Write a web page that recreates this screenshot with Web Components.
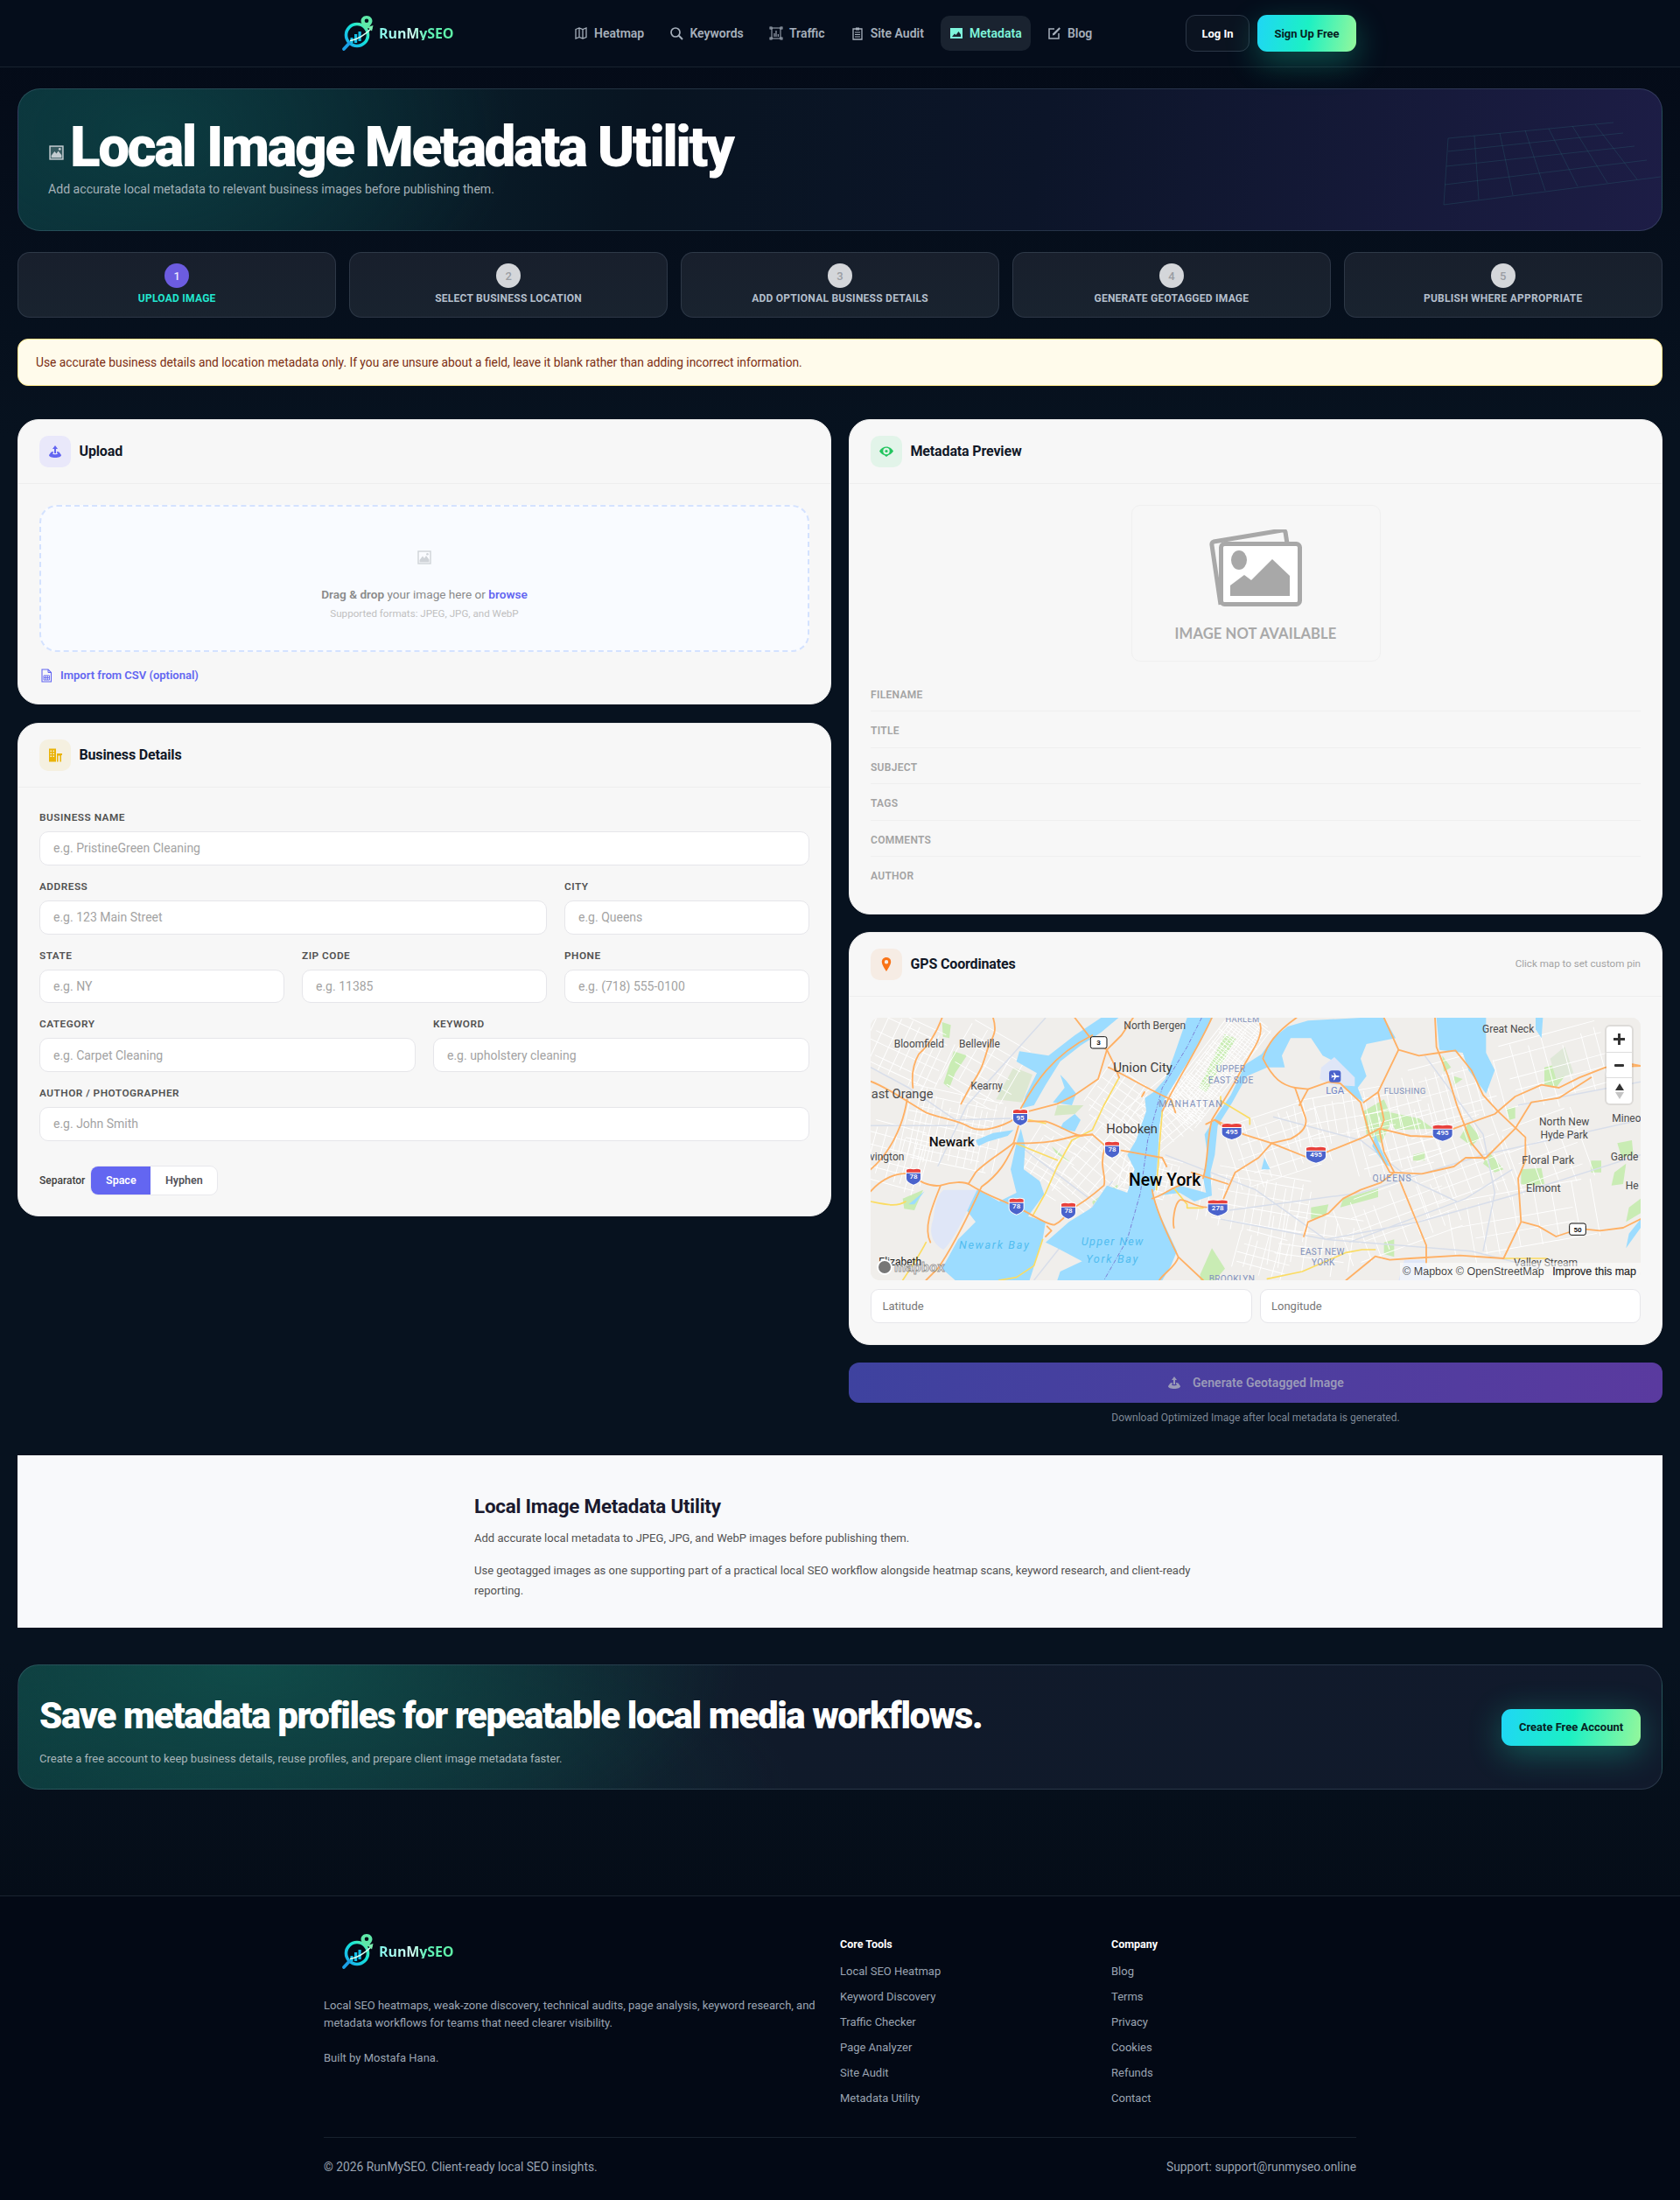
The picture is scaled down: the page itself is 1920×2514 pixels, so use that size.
<!DOCTYPE html>
<html lang="en">
<head>
<meta charset="utf-8">
<title>Local Image Metadata Utility</title>
<style>
html,body{margin:0;padding:0}
body{font-family:Roboto,"Liberation Sans",sans-serif;background:linear-gradient(180deg,#040a17 0,#07121f 500px,#07121f 1900px,#050d18 2164px);color:#fff}
</style>
</head>
<body>
<rm-nav></rm-nav>
<rm-page>
  <rm-hero heading="Local Image Metadata Utility" sub="Add accurate local metadata to relevant business images before publishing them."></rm-hero>
  <rm-steps>
    <rm-step n="1" active>Upload Image</rm-step>
    <rm-step n="2">Select Business Location</rm-step>
    <rm-step n="3">Add Optional Business Details</rm-step>
    <rm-step n="4">Generate Geotagged Image</rm-step>
    <rm-step n="5">Publish Where Appropriate</rm-step>
  </rm-steps>
  <rm-alert>Use accurate business details and location metadata only. If you are unsure about a field, leave it blank rather than adding incorrect information.</rm-alert>
  <rm-workspace>
    <rm-card slot="left" heading="Upload" tone="purple" icon="upload"><rm-upload></rm-upload></rm-card>
    <rm-card slot="left" heading="Business Details" tone="yellow" icon="building"><rm-form></rm-form></rm-card>
    <rm-card slot="right" heading="Metadata Preview" tone="green" icon="eye"><rm-preview></rm-preview></rm-card>
    <rm-card slot="right" heading="GPS Coordinates" tone="orange" icon="pin" hint="Click map to set custom pin"><rm-gps></rm-gps></rm-card>
    <rm-generate slot="right"></rm-generate>
  </rm-workspace>
  <rm-about></rm-about>
  <rm-cta></rm-cta>
</rm-page>
<rm-footer></rm-footer>

<script>
const IC = {
  map:'<path d="M2 3.500 6 2l4 1.500L14 2v10.500L10 14l-4-1.500L2 14zM6 2v10.500M10 3.500V14" fill="none" stroke="currentColor" stroke-width="1.300"/>',
  search:'<circle cx="7" cy="7" r="5" fill="none" stroke="currentColor" stroke-width="1.700"/><path d="M10.800 10.800 15 15" stroke="currentColor" stroke-width="2"/>',
  traffic:'<path d="M3 2h10v12H3z" fill="none" stroke="currentColor" stroke-width="1"/><g fill="#07101d" stroke="currentColor"><rect x="1" y="1" width="2" height="2"/><rect x="13" y="1" width="2" height="2"/><rect x="1" y="13" width="2" height="2"/><rect x="13" y="13" width="2" height="2"/></g><path d="M6 12V8M8 12V5M10.300 12V9" stroke="currentColor" stroke-width="1.100"/>',
  audit:'<path d="M3 3h10v12H3z" fill="none" stroke="currentColor" stroke-width="1.300"/><path d="M6 1.500h4V4.500H6z" fill="currentColor"/><path d="M5 7h6M5 9.500h6M5 12h6" stroke="currentColor" stroke-width="1.100"/>',
  image:'<path fill-rule="evenodd" d="M1 2h14v12H1zM3 12h10V9.500L10.500 6 7.500 10 6 8.500z" fill="currentColor"/><circle cx="5" cy="5.500" r="1.400" fill="currentColor"/>',
  photo:'<rect x="1" y="1" width="14" height="14" fill="#fff" fill-opacity=".18" stroke="currentColor" stroke-width="1.400"/><path d="M2.500 13.500V11L6 6.500l2 2.500 2-3 3.500 4.500v3z" fill="currentColor"/><circle cx="11.500" cy="4.200" r="1.300" fill="currentColor"/>',
  pen:'<path d="M8 3H2v11h11V8" fill="none" stroke="currentColor" stroke-width="1.500"/><path d="M13.500 1.200 15 2.700 8 10l-2.200.600.500-2.300z" fill="currentColor"/>',
  upload:'<path d="M8 1 11 5H9v5H7V5H5z" fill="currentColor"/><path d="M3.500 8.500 6 8v1.500C5 10 4.800 10.500 5.500 10.800 7 11.500 9 11.500 10.500 10.800 11.200 10.500 11 10 10 9.500V8l2.500.500L15 12c0 2-3 3-7 3s-7-1-7-3z" fill="currentColor"/>',
  building:'<path fill-rule="evenodd" d="M1 .500h8v15H1zM2.500 2.500V4H4V2.500zM5.500 2.500V4H7V2.500zM2.500 5.500V7H4V5.500zM5.500 5.500V7H7V5.500zM2.500 8.500V10H4V8.500zM5.500 8.500V10H7V8.500z" fill="currentColor"/><path fill-rule="evenodd" d="M10 6h6v2h-1v7.500h-1.500V8.500h-2v7H10z" fill="currentColor"/>',
  eye:'<path fill-rule="evenodd" d="M0 7.500C2 4 5 2.500 8 2.500s6 1.500 8 5c-1.500 2.500-3.500 4-5.500 4.600L8 14l-2.500-1.900C3.500 11.500 1.500 10 0 7.500zM8 3.800a3.700 3.700 0 1 0 0 7.400 3.700 3.700 0 0 0 0-7.400z" fill="currentColor"/><circle cx="8" cy="7.500" r="1.600" fill="currentColor"/>',
  pin:'<path fill-rule="evenodd" d="M8 0C4.800 0 2.800 2.300 2.800 5.200 2.800 8.800 8 16 8 16s5.200-7.200 5.200-10.800C13.200 2.300 11.200 0 8 0zm0 3a2.200 2.200 0 1 1 0 4.400A2.200 2.200 0 0 1 8 3z" fill="currentColor"/>',
  csv:'<path d="M3 1h7l3.500 3.500V15H3z" fill="none" stroke="currentColor" stroke-width="1.100"/><path d="M10 1v3.500h3.500" fill="none" stroke="currentColor"/><path d="M5 8h6.500v5H5zM5 10.500h6.500M7.200 8v5M9.400 8v5" fill="none" stroke="currentColor" stroke-width=".9"/>'
};
const svgIcon=(n,s=16,extra='')=>`<svg width="${s}" height="${s}" viewBox="0 0 16 16" aria-hidden="true" ${extra}>${IC[n]}</svg>`;

function define(name,css,html,setup){
  customElements.define(name,class extends HTMLElement{
    constructor(){
      super();
      const root=this.attachShadow({mode:'open'});
      const tpl=document.createElement('template');
      tpl.innerHTML=`<style>${css}</style>${typeof html==='function'?html(this):html}`;
      root.appendChild(tpl.content.cloneNode(true));
    }
    connectedCallback(){
      if(this._done)return;this._done=true;
      if(typeof html==='function'){this.shadowRoot.innerHTML=`<style>${css}</style>${html(this)}`;}
      if(setup)setup(this,this.shadowRoot);
    }
  });
}

define('rm-logo',`
:host{display:inline-flex;align-items:center;height:42px;color:#fff}
svg{display:block;flex:none}
span{font:700 16px/1 "Open Sans",Roboto,sans-serif;letter-spacing:-.1px;margin-left:-1px;background:linear-gradient(90deg,#7ff3e8 0,#d8fff4 45%,#5ff0b8 62%,#5ff2a4 100%);-webkit-background-clip:text;background-clip:text;color:transparent}
`,`<svg width="44" height="42" viewBox="0 0 44 42">
<defs><linearGradient id="lg" x1="0" y1="1" x2="1" y2="0"><stop offset="0" stop-color="#1aa8f0"/><stop offset=".6" stop-color="#14e6d8"/><stop offset="1" stop-color="#6ef0a0"/></linearGradient></defs>
<circle cx="18" cy="23" r="12.500" fill="none" stroke="url(#lg)" stroke-width="3.600"/>
<path d="M9.500 32 3 39" stroke="#1a9fe6" stroke-width="3.800" stroke-linecap="round"/>
<path d="M10.500 26h3v6h-3zM15 22h3.200v10H15zM19.500 19h3.200v11h-3.200z" fill="#12bfe6"/>
<path d="M10 29.500C20 28 27 23 35 15" fill="none" stroke="#d6fff0" stroke-width="1.700"/><path d="M30 14l6.500-2-1.500 6.500z" fill="#7ef0b0"/>
<path d="M29 1c-4 0-6.500 3-6.500 6 0 3.800 6.500 10 6.500 10s6.500-6.200 6.500-10C35.500 4 33 1 29 1zm0 3.500a2.300 2.300 0 1 1 0 4.600 2.300 2.300 0 0 1 0-4.600z" fill="#5fe8a8"/>
</svg><span>RunMySEO</span>`);

define('rm-nav',`
:host{display:block;height:76px;border-bottom:1px solid #18222f;background:#050d1b;position:relative;z-index:2}
.in{box-sizing:border-box;width:1180px;height:76px;margin:0 auto;display:flex;align-items:center;padding-top:0}
rm-logo{width:276px;padding-left:20px;box-sizing:border-box}
nav{display:flex;gap:9.200px;margin-left:0}
a{display:flex;align-items:center;gap:7px;height:40px;padding:0 10px;border-radius:10px;font:600 14px/1 Roboto,sans-serif;color:#a7b0bc;text-decoration:none;white-space:nowrap}
a svg{flex:none}
a.on{background:#1a2330;color:#7ff5dc}
.act{margin-left:auto;display:flex;gap:9px}
button{font:700 13px/1 Roboto,sans-serif;height:42px;border-radius:11px;border:1px solid #2c3747;background:#0b1320;color:#fff;padding:0}
.li{width:73px}
.su{width:113px;border:0;background:linear-gradient(100deg,#1fd6f5 0,#1cf0c4 50%,#95f79b 100%);color:#06211f;box-shadow:0 12px 36px rgba(25,240,190,.3)}
`,`<div class="in"><rm-logo></rm-logo><nav>
<a href="#">${svgIcon('map')}Heatmap</a><a href="#">${svgIcon('search')}Keywords</a><a href="#">${svgIcon('traffic')}Traffic</a><a href="#">${svgIcon('audit')}Site Audit</a><a href="#" class="on">${svgIcon('image')}Metadata</a><a href="#">${svgIcon('pen')}Blog</a>
</nav><div class="act"><button class="li">Log In</button><button class="su">Sign Up Free</button></div></div>`);

define('rm-page',`:host{display:block;padding:24px 20px 0;box-sizing:border-box}`,`<slot></slot>`);

define('rm-hero',`
:host{display:block;position:relative;overflow:hidden;box-sizing:border-box;height:163px;border:1px solid rgba(120,150,170,.24);border-radius:26px;padding:32px 34px 0;
background:radial-gradient(420px 260px at 8% 30%,rgba(13,70,72,.65),rgba(13,70,72,0) 100%),linear-gradient(100deg,#0a2d36 0,#081421 38%,#0c1529 62%,#1d1d46 100%)}
h1{margin:0;display:flex;font:900 64px/70.400px Roboto,sans-serif;letter-spacing:-2.560px;color:#fff}
h1 svg{flex:none;margin:32px 7px 0 1px;color:#c3ccd0}
p{margin:2px 0 0;font:400 14.100px/20px Roboto,sans-serif;color:#a3b1b8}
.grid{position:absolute;right:0;top:0;left:0;bottom:0;pointer-events:none}
`,el=>`<h1>${svgIcon('photo',17)}${el.getAttribute('heading')||''}</h1><p>${el.getAttribute('sub')||''}</p>
<svg class="grid" width="1878" height="161" viewBox="21 102 1878 161" fill="none" stroke="#2a6a78" stroke-opacity=".3" stroke-width="1">
<path d="M1655 158 1844 140M1655 173 1855 152M1653 190 1868 167M1651 211 1882 183M1650 234 1898 202"/>
<path d="M1655 158 1650 234M1685 155 1690 228M1714 152 1729 223M1743 149 1766 218M1770 147 1803 213M1797 144 1837 209M1823 142 1871 205"/></svg>`);

define('rm-steps',`:host{display:grid;grid-template-columns:repeat(5,1fr);gap:14.400px;margin-top:24px}`,`<slot></slot>`);
define('rm-step',`
:host{display:flex;flex-direction:column;align-items:center;box-sizing:border-box;height:75px;padding-top:12px;border:1px solid rgba(130,150,175,.2);border-radius:14px;background:linear-gradient(180deg,#181f2c,#19232f)}
i{display:flex;align-items:center;justify-content:center;width:28px;height:28px;border-radius:50%;background:#d4d6da;color:#9a9da3;font:500 13px/1 Roboto,sans-serif}
span{margin-top:4px;font:700 12px/16px Roboto,sans-serif;letter-spacing:.25px;text-transform:uppercase;color:#b4bfcc}
:host([active]) i{background:#6c5ce0;color:#e9e7ff}
:host([active]) span{color:#22e6cf}
`,el=>`<i>${el.getAttribute('n')||''}</i><span><slot></slot></span>`);

define('rm-alert',`:host{display:block;box-sizing:border-box;height:54px;margin-top:24px;padding:16px 20px;border:1px solid #fde68a;border-radius:12px;background:#fffbeb;color:#7c2d12;font:400 13.770px/20px Roboto,sans-serif}`,`<slot></slot>`);

define('rm-workspace',`
:host{display:grid;grid-template-columns:1fr 1fr;gap:20px;margin-top:38px;align-items:start}
.col{display:flex;flex-direction:column;gap:20px}
.col.l{gap:21px}
`,`<div class="col l"><slot name="left"></slot></div><div class="col"><slot name="right"></slot></div>`);

const TONES={purple:['#e9e8fa','#6366f1'],yellow:['#f5f0e0','#eab308'],green:['#e2f4e9','#22c55e'],orange:['#f6ece4','#f97316']};
define('rm-card',`
:host{display:block;box-sizing:border-box;border:1px solid #ececec;border-radius:24px;background:#f7f7f7;color:#111827;overflow:hidden}
header{box-sizing:border-box;height:73px;display:flex;align-items:center;padding:0 24px;gap:9.500px;border-bottom:1px solid #eeeeee}
.t{width:36px;height:36px;border-radius:10px;display:flex;align-items:center;justify-content:center}
h2{margin:0;font:700 16px/1 Roboto,sans-serif;letter-spacing:-.15px;color:#111827}
small{margin-left:auto;font:400 11.600px/1 Roboto,sans-serif;color:#a3a3a3}
`,el=>{const t=TONES[el.getAttribute('tone')]||TONES.purple;const h=el.getAttribute('hint');
return `<header><div class="t" style="background:${t[0]};color:${t[1]}">${svgIcon(el.getAttribute('icon'))}</div><h2>${el.getAttribute('heading')||''}</h2>${h?`<small>${h}</small>`:''}</header><slot></slot>`});

define('rm-upload',`
:host{display:block;padding:24px 24px 22px}
.dz{box-sizing:border-box;height:168px;border:2px dashed #d4e2ff;border-radius:20px;background:#f9fbff;display:flex;flex-direction:column;align-items:center;padding-top:50px;color:#8a8a8a;font:400 13.600px/20px Roboto,sans-serif}
.dz svg{color:#cfd3d8}
.dz p{margin:24px 0 0}
b{font-weight:600}
.br{color:#6366f1;font-weight:600}
.dz small{font-size:11.600px;line-height:16px;color:#c0c0c0;margin-top:4px}
.imp{display:flex;align-items:center;gap:8px;height:20px;margin-top:17px;font:600 13px/20px Roboto,sans-serif;color:#6366f1}
`,`<div class="dz">${svgIcon('photo',16)}<p><b>Drag &amp; drop</b> your image here or <span class="br">browse</span></p><small>Supported formats: JPEG, JPG, and WebP</small></div>
<div class="imp">${svgIcon('csv',16)}Import from CSV (optional)</div>`);

define('rm-field',`
:host{display:block;min-width:0}
label{display:block;height:16px;margin-bottom:8px;font:600 11.800px/16px Roboto,sans-serif;letter-spacing:.5px;text-transform:uppercase;color:#525252}
input{display:block;box-sizing:border-box;width:100%;height:38.750px;border:1px solid #e6e6ea;border-bottom-width:1.500px;border-radius:10px;background:#fff;padding:0 15px;font:400 14px/1 Roboto,sans-serif;color:#222;outline:0}
input::placeholder{color:#a3a3a3;opacity:1}
`,el=>`<label>${el.getAttribute('label')||''}</label><input placeholder="${el.getAttribute('ph')||''}" aria-label="${el.getAttribute('label')||el.getAttribute('ph')}">`);

define('rm-form',`
:host{display:block;padding:26px 24px 23px}
.r{display:grid;gap:20px;margin-bottom:16px}
.sep{display:flex;align-items:center;gap:6px;margin-top:28px;font:500 12px/1 Roboto,sans-serif;color:#404040}
.seg{display:flex;height:32px;border:1px solid #e8e8ec;border-radius:9px;overflow:hidden;background:#fff}
.seg span{display:flex;align-items:center;justify-content:center;font:600 12.500px/1 Roboto,sans-serif;color:#52525b;width:76px}
.seg span.on{width:68px;background:#6366f1;color:#fff}
`,`<div class="r"><rm-field label="Business Name" ph="e.g. PristineGreen Cleaning"></rm-field></div>
<div class="r" style="grid-template-columns:580px 280px"><rm-field label="Address" ph="e.g. 123 Main Street"></rm-field><rm-field label="City" ph="e.g. Queens"></rm-field></div>
<div class="r" style="grid-template-columns:repeat(3,1fr)"><rm-field label="State" ph="e.g. NY"></rm-field><rm-field label="Zip Code" ph="e.g. 11385"></rm-field><rm-field label="Phone" ph="e.g. (718) 555-0100"></rm-field></div>
<div class="r" style="grid-template-columns:1fr 1fr"><rm-field label="Category" ph="e.g. Carpet Cleaning"></rm-field><rm-field label="Keyword" ph="e.g. upholstery cleaning"></rm-field></div>
<div class="r" style="margin:0"><rm-field label="Author / Photographer" ph="e.g. John Smith"></rm-field></div>
<div class="sep"><span>Separator</span><div class="seg"><span class="on">Space</span><span>Hyphen</span></div></div>`);

define('rm-preview',`
:host{display:block;padding:24px 24px 23.500px}
.ph{box-sizing:border-box;width:285px;height:179px;margin:0 auto 15.500px;border:1px solid #f0f0f0;border-radius:10px;background:#f7f7f7;display:flex;flex-direction:column;align-items:center;padding-top:27px}
.ph span{margin-top:21px;font:700 16.600px/20px Lato,"Open Sans",sans-serif;color:#a9a9a9;letter-spacing:.1px;white-space:nowrap}
.row{box-sizing:border-box;height:41.500px;padding-top:14px;border-bottom:1px solid #efefef;font:600 12px/16px Roboto,sans-serif;letter-spacing:.3px;color:#a3a3a3;text-transform:uppercase}
.row:last-child{border:0}
`,`<div class="ph"><svg width="106" height="88" viewBox="0 0 106 88"><path d="M13 86 3 18c-.3-2 .5-3.500 2-4L83 1c2-.3 3.500.5 4 2l2 13" fill="#f7f7f7" stroke="#a8a8a8" stroke-width="5" stroke-linejoin="round"/><rect x="13.500" y="16.500" width="90" height="69" rx="4" fill="#fff" stroke="#a8a8a8" stroke-width="5"/><ellipse cx="34" cy="35" rx="9" ry="11" fill="#a8a8a8"/><path d="M24 76V64l16-12 8 6 24-24 20 19v23z" fill="#a8a8a8"/></svg><span>IMAGE NOT AVAILABLE</span></div>
<div class="row">Filename</div><div class="row">Title</div><div class="row">Subject</div><div class="row">Tags</div><div class="row">Comments</div><div class="row">Author</div>`);

/* map */
function streetGrids(){
  let s=1234;const rnd=()=>(s=(s*1103515245+12345)&0x7fffffff)/0x7fffffff;
  const clusters=[ // cx,cy,w,h,angle,spacing
    [1185,170,440,150,-52,9],[1010,330,240,200,-40,18],[880,300,200,260,-55,26],[790,520,300,260,-50,30],[960,540,200,140,15,18],
    [280,390,330,260,12,24],[130,120,300,220,25,34],[400,170,240,240,-60,36],[80,480,220,220,15,30],[620,500,200,200,-58,34],
    [1400,440,330,240,-18,40],[1320,640,380,220,10,34],[1640,340,360,170,-10,36],[1800,430,300,240,-15,42],[1990,260,300,230,-15,36],
    [2030,500,340,280,-20,50],[1820,690,420,240,-20,50],[2350,180,400,260,-15,50],[2320,470,340,260,-20,54],[2240,700,500,220,-10,56],[1530,780,320,210,8,42],[1350,820,200,150,15,34]
  ];
  let out='';
  for(const [cx,cy,w,h,a,sp] of clusters){
    let d='';
    for(let x=-w/2;x<=w/2;x+=sp*(.7+rnd()*.7)){const t=-h/2+rnd()*h*.2,b=h/2-rnd()*h*.2;d+=`M${x.toFixed(0)} ${t.toFixed(0)}V${b.toFixed(0)}`;}
    for(let y=-h/2;y<=h/2;y+=sp*(.8+rnd()*.9)){const l=-w/2+rnd()*w*.2,r=w/2-rnd()*w*.2;d+=`M${l.toFixed(0)} ${y.toFixed(0)}H${r.toFixed(0)}`;}
    out+=`<path transform="translate(${cx} ${cy}) rotate(${a})" d="${d}"/>`;
  }
  return out;
}
const shield=(x,y,n)=>{const w=String(n).length>2?36:27;
 return `<g transform="translate(${x} ${y})"><path d="M${-w} -24q${w/2} -6 ${w} -2q${w/2} -4 ${w} 2v32q0 14 ${-w} 24q${-w} -10 ${-w} -24z" fill="#fff"/><path d="M${-w+3} -22q${w/2-2} -5 ${w-3} -1q${w/2} -4 ${w-3} 1v9h${-2*w+6}z" fill="#e8413c"/><path d="M${-w+3} -10h${2*w-6}v18q0 12 ${-w+3} 21q${-w+3} -9 ${-w+3} -21z" fill="#4a63cc"/><text y="10" text-anchor="middle" font-size="24" font-weight="600" fill="#fff">${n}</text></g>`};
const sqShield=(x,y,n)=>`<g transform="translate(${x} ${y})"><rect x="-28" y="-20" width="56" height="40" rx="7" fill="#fff" stroke="#111" stroke-width="3"/><text y="9" text-anchor="middle" font-size="24" font-weight="700" fill="#111">${n}</text></g>`;
const lab=(x,y,t,size,col='#4b4b4b',extra='')=>`<text x="${x}" y="${y}" font-size="${size}" fill="${col}" ${extra}>${t}</text>`;
const DIST='#8191bb',MID='text-anchor="middle"';

define('rm-map',`
:host{display:block;position:relative;height:300px;overflow:hidden;border-radius:10px;background:#f0eeeb}
svg.m{display:block;width:880px;height:300px}
text{font-family:Roboto,sans-serif}
.z{position:absolute;right:10px;top:10px;width:29px;height:88px;background:#fff;border-radius:4px;box-shadow:0 0 0 2px rgba(0,0,0,.08);display:flex;flex-direction:column}
.z div{flex:1;display:flex;align-items:center;justify-content:center;border-top:1px solid #ddd}
.z div:first-child{border:0}
.attr{position:absolute;right:0;bottom:0;background:rgba(255,255,255,.5);padding:0 5px 0 3px;height:20px;font:400 12.500px/20px "Liberation Sans",Arial,sans-serif;color:rgba(0,0,0,.75);white-space:nowrap}
.attr b{font-weight:400;color:rgba(0,0,0,.85);margin-left:6px;-webkit-text-stroke:.3px rgba(0,0,0,.6)}
.lg{position:absolute;left:7px;bottom:6px;display:flex;align-items:center;gap:2px;font:700 14.500px/1 "Liberation Sans",Arial,sans-serif;color:#fff;-webkit-text-stroke:1px rgba(70,70,70,.55);letter-spacing:.4px}
.lg i{width:18px;height:18px;border-radius:50%;background:#777;border:2px solid #fff;box-sizing:border-box}
`,()=>`<svg class="m" viewBox="0 0 2640 900">
<rect width="2640" height="900" fill="#f0eeeb"/>
<g fill="#c9ecb4">
<path d="M1125 240 1215 55 1252 72 1150 255z"/><path d="M245 15 275 25 270 70 248 65z"/><path d="M285 115 330 130 290 190 270 240 250 225z"/><path d="M490 170 555 195 520 290 430 280z" fill="#dde8d2"/><path d="M620 440 690 500 640 470z"/><path d="M640 300 730 300 700 330 630 335z" fill="#d6e8c5"/><path d="M110 620 180 590 150 660 115 655z"/><path d="M760 630 850 570 830 620 770 680z"/><path d="M920 700 985 665 975 720 930 740z"/><path d="M1130 880 1170 790 1215 860 1180 900 1130 900z"/>
<path d="M1690 320 1760 280 1790 350 1750 430 1700 400z"/><path d="M1760 320 1880 345 1930 380 1800 385z"/><path d="M2120 460 2170 520 2140 530 2100 500z"/><path d="M2050 360 2090 410 2060 440 2020 410z"/><path d="M2180 310 2210 305 2210 345 2190 350z"/><path d="M2310 170 2350 160 2380 200 2350 240 2310 230z"/><path d="M1620 620 1740 585 1740 615 1610 650z"/><path d="M2230 520 2300 515 2310 570 2260 575 2230 570z"/><path d="M2470 490 2505 490 2505 530 2470 530z"/><path d="M2560 430 2610 420 2615 470 2575 480z"/><path d="M2550 530 2590 500 2580 570 2540 575z"/><path d="M1760 770 1795 760 1795 820 1760 810z"/><path d="M1510 650 1570 640 1560 680 1510 690z"/><path d="M1860 470 1900 460 1900 490 1860 490z"/><path d="M2000 200 2030 210 2000 230z"/>
<path d="M2330 140 2380 100 2410 190 2350 210z" fill="#dfe8d8"/><path d="M1960 130 1990 170 1965 185z"/><path d="M2600 650 2640 620 2640 670 2590 700z"/>
</g>
<g fill="none" stroke="#fff" stroke-width="2.800">${streetGrids()}</g>
<g fill="none" stroke="#d8deea" stroke-width="4.500">
<path d="M0 170 130 240 290 350 480 345M0 370 290 370M500 430 750 620M600 0 330 300 230 510M830 560 560 900M1010 470 1320 590 1560 760 2060 800 2300 860M1230 660 1680 600 2100 470 2640 350M1200 690 1560 760 1880 700 2200 610 2640 470M1640 770 2040 620 2200 520M1380 340 1680 420 1860 560 2010 630M1900 130 2100 400 2140 600 2100 800M2220 300 2640 220"/>
</g>
<g fill="#9cdcff">
<path d="M1085 0H1172L1130 85 1060 195 1005 285 990 370 985 470 975 590 968 600 985 660 1050 800 1030 850 1000 900H640L650 870 725 835 640 790 600 770 680 700 760 650 810 575 880 600 905 520 880 470 910 420 945 320 940 275 970 255 1010 210 1040 130z"/>
<path d="M1150 600 1140 550 1155 470 1145 400 1180 345 1235 265 1285 160 1340 125 1380 70 1430 30 1500 10 1680 0H1760L1800 70 1700 90 1680 140 1700 200 1670 240 1690 290 1660 270 1610 225 1590 150 1550 130 1510 70 1440 70 1410 130 1420 170 1360 170 1290 200 1240 290 1190 370 1180 470 1165 530 1170 610 1110 630 1060 600 990 610 1060 575z"/>
<path d="M500 430 515 380 530 440 525 520 580 560 595 605 540 680 600 700 590 760 545 900H290L245 860 300 760 360 700 290 610 370 590 440 630 500 600 480 520z"/>
<path d="M510 115 610 130 700 60 790 0 850 0 790 50 720 95 650 150 600 230 560 300 520 310 530 270 570 190 500 150z"/>
<path d="M650 195 665 240 625 290 690 300 705 260 670 215z"/>
<path d="M700 330 720 350 700 390 650 380 660 360z"/>
<path d="M360 420 420 395 490 385 470 405 400 425 370 440z"/>
<path d="M130 640 185 595 150 640z"/>
<path d="M1940 0H2110L2110 120 2140 180 2110 260 2050 180 2030 120 1950 110z"/>
<path d="M2280 0H2305L2300 70 2280 40z"/>
<path d="M2600 740 2640 690 2640 720 2590 790z"/>
<path d="M1730 400 1750 450 1780 510 1760 500 1720 440z"/>
<path d="M1350 480 1370 520 1340 520z"/>
</g>
<path d="M360 590H250C225 610 220 650 215 690 200 730 205 770 250 795 290 760 340 640 365 590z" fill="#dfe6f7"/>
<path d="M1545 170 1590 135 1660 205 1660 235 1580 230 1540 210z" fill="#dfe6f7"/>
<path d="M1830 830H1900L1920 900H1810z" fill="#dfe6f7"/>
<path d="M1135 0 1085 100 1000 240 950 420 925 600 880 760 800 900" fill="none" stroke="#7d7fd6" stroke-width="3" stroke-dasharray="14 5 3 5"/>
<g fill="none" stroke="#fbdc62" stroke-width="5" stroke-linecap="round" stroke-linejoin="round">
<path d="M852 205 800 300 760 385 690 420 640 510 600 600 555 680"/><path d="M500 432 640 488"/><path d="M1000 320 990 440 980 590"/><path d="M540 350 600 362"/><path d="M1040 585 1085 640V652H1140"/><path d="M1200 270V285L1300 345 1300 365"/><path d="M0 630C50 640 90 650 120 630"/><path d="M590 760 560 850 500 890 440 900"/><path d="M1730 795 1685 795 1630 805 1480 870 1360 895"/><path d="M2170 825 2320 825"/><path d="M190 770C170 810 130 870 110 900"/>
</g>
<g fill="none" stroke="#ffb064" stroke-width="5.500" stroke-linecap="round" stroke-linejoin="round">
<path d="M0 218C60 240 120 285 190 325 240 345 300 350 340 375 370 390 420 385 480 355L510 335"/>
<path d="M245 0C230 40 205 90 165 125 145 160 140 200 145 240"/>
<path d="M420 0C435 50 420 60 400 110 385 160 380 180 345 230L310 295"/>
<path d="M700 0 750 65 810 110 835 160 852 205"/>
<path d="M900 0 860 60 810 110 780 210 700 265 640 295 545 320"/>
<path d="M515 310C560 230 620 130 760 60"/>
<path d="M815 170C880 200 960 250 1030 280L1045 325"/>
<path d="M490 430 510 360"/>
<path d="M540 355H600C650 370 680 395 720 405L760 400"/>
<path d="M490 430C440 470 400 490 360 530L335 570"/>
<path d="M495 430C470 480 450 530 380 580 360 620 300 760 230 860L190 900"/>
<path d="M0 595C40 550 90 530 130 535 170 565 210 580 240 575 280 562 320 560 340 572 400 610 450 625 500 650 550 670 600 710 630 710 650 700 670 680 680 660"/>
<path d="M680 660C720 640 760 610 800 575 810 540 780 510 805 440"/>
<path d="M0 520C60 470 110 380 125 280"/>
<path d="M240 575C210 650 180 720 205 770"/>
<path d="M490 430C600 432 650 420 700 405L760 400 805 440"/>
<path d="M860 455 1000 480 1015 510"/>
<path d="M965 590C975 650 1010 730 1055 820 1050 850 1000 880 990 900M1055 820 1140 900"/>
<path d="M1170 0C1130 90 1060 200 1020 280L1000 320"/>
<path d="M1335 20C1350 70 1300 120 1260 200 1240 240 1200 300 1170 350 1150 430 1160 480 1140 550"/>
<path d="M965 620C1000 610 1020 590 1060 575M1100 530 1225 570M1155 650C1110 650 1080 620 1060 625 1040 640 1035 700 1040 720"/>
<path d="M605 715 620 730 600 750"/><path d="M930 270Q945 245 935 260"/>
<g transform="translate(1080 0)">
<path d="M70 365 100 350 125 370M100 350 200 400 295 430 420 480 485 460 610 410 665 380 770 405 850 408 920 380 1060 330 1130 270 1220 230 1280 240 1350 205 1440 170 1560 165"/>
<path d="M295 430 360 415C400 395 420 370 410 340L375 240C330 230 300 210 265 140 280 90 310 50 380 0"/>
<path d="M375 240 420 245 490 220 530 225 600 290 630 400 700 530 810 535 920 510 960 480 1030 480 1130 380 1185 290 1280 275 1390 205"/>
<path d="M610 290 660 255 730 110 680 0"/>
<path d="M660 255 680 350 665 390 680 460 715 530"/>
<path d="M730 110 800 130 870 120 925 112 980 180 1020 265 1070 320 1165 410 1165 490 1140 550 1150 700 1090 825"/>
<path d="M855 0 860 100 900 200 930 300 980 430 1025 485"/>
<path d="M295 430 250 480 170 530 130 620"/>
<path d="M405 750 420 700 490 670 540 620 600 590 670 565 715 530"/>
<path d="M735 560 825 780V840"/>
<path d="M1155 700 1210 715 1270 750 1315 735M1370 725 1420 730 1500 720 1560 690"/>
<path d="M1090 825 940 815 770 825 700 830 650 818 550 900"/>
<path d="M420 245 390 300"/>
<path d="M1480 150 1560 165"/>
</g>
</g>
${shield(513,340,95)}${shield(828,450,78)}${shield(147,543,78)}${shield(500,645,78)}${shield(678,660,78)}${shield(1238,388,495)}${shield(1527,468,495)}${shield(1961,393,495)}${shield(1190,650,278)}
${sqShield(782,85,3)}${sqShield(2424,725,50)}
<rect x="1572" y="181" width="40" height="40" rx="9" fill="#4a63cc"/><path d="M1592 186l2.500 1 .8 10 9.700 6v3l-10-3-.5 6 3 2.500v2l-5.500-1.500-5.500 1.500v-2l3-2.500-.5-6-10 3v-3l9.700-6 .8-10z" fill="#fff" transform="rotate(90 1592 201)"/>
${lab(868,40,'North Bergen',36)}${lab(80,103,'Bloomfield',36)}${lab(303,101,'Belleville',36)}${lab(832,185,'Union City',45,'#3c3c3c')}
${lab(1235,185,'UPPER',31,DIST,MID+' letter-spacing="1"')}${lab(1235,224,'EAST SIDE',31,DIST,MID+' letter-spacing="1"')}
${lab(343,247,'Kearny',36)}${lab(2,275,'ast Orange',44)}${lab(988,305,'MANHATTAN',31,DIST,'letter-spacing="3.500"')}
${lab(808,397,'Hoboken',44,'#3c3c3c')}${lab(200,440,'Newark',46,'#111','font-weight="500"')}${lab(-3,490,'vington',36)}
${lab(885,575,'New York',58,'#000','font-weight="500"')}
${lab(303,793,'Newark Bay',38,'#52bdf0','font-style="italic" letter-spacing="5"')}${lab(830,780,'Upper New',38,'#52bdf0',MID+' font-style="italic" letter-spacing="4"')}${lab(830,840,'York Bay',38,'#52bdf0',MID+' font-style="italic" letter-spacing="5"')}
${lab(28,848,'Elizabeth',36,'#222')}${lab(1275,15,'HARLEM',28,DIST,MID+' letter-spacing="1"')}
${lab(1473,813,'EAST NEW',30,DIST,'letter-spacing="1"')}${lab(1552,850,'YORK',30,DIST,MID+' letter-spacing="1"')}${lab(1160,906,'BROOKLYN',30,DIST,'letter-spacing="1"')}
${lab(2097,50,'Great Neck',36)}${lab(1592,260,'LGA',34,'#6f86c8',MID)}${lab(1760,262,'FLUSHING',29,DIST,'letter-spacing="1"')}
${lab(2378,370,'North New',36,'#4b4b4b',MID)}${lab(2378,415,'Hyde Park',36,'#4b4b4b',MID)}${lab(2542,358,'Mineo',36)}${lab(2537,488,'Garde',36)}
${lab(2233,500,'Floral Park',38)}${lab(2247,598,'Elmont',38)}${lab(2588,588,'He',36)}${lab(1788,562,'QUEENS',31,DIST,MID+' letter-spacing="3"')}${lab(2205,853,'Valley Stream',36)}
</svg>
<div class="z"><div><svg width="17" height="17" viewBox="0 0 17 17"><path d="M7 2h3v5h5v3h-5v5H7v-5H2V7h5z" fill="#333"/></svg></div><div><svg width="17" height="17" viewBox="0 0 17 17"><rect x="3" y="7" width="11" height="3" rx="1" fill="#333"/></svg></div><div><svg width="14" height="20" viewBox="0 0 14 20"><path d="M7 1l5 8H2z" fill="#333"/><path d="M7 19l5-8H2z" fill="#c4c4c4"/></svg></div></div>
<div class="lg"><i></i><span>mapbox</span></div>
<div class="attr">© Mapbox © OpenStreetMap <b>Improve this map</b></div>`);

define('rm-gps',`
:host{display:block;padding:24px}
.c{display:grid;grid-template-columns:1fr 1fr;gap:9px;margin-top:10px}
input{box-sizing:border-box;width:100%;height:38.500px;border:1px solid #e6e6ea;border-radius:9px;background:#fff;padding:0 12.500px;font:400 13px/1 Roboto,sans-serif;outline:0}
input::placeholder{color:#777;opacity:1}
`,`<rm-map></rm-map><div class="c"><input placeholder="Latitude" aria-label="Latitude"><input placeholder="Longitude" aria-label="Longitude"></div>`);

define('rm-generate',`
:host{display:block}
button{display:flex;align-items:center;justify-content:center;gap:13px;width:100%;height:46px;border:0;border-radius:12px;background:linear-gradient(95deg,#3e429f,#5a3a9f);color:#9a9ab8;font:600 14px/1 Roboto,sans-serif;letter-spacing:.05px}
p{margin:9px 0 0;text-align:center;font:400 12px/16px Roboto,sans-serif;color:#7e8896}
`,`<button>${svgIcon('upload',16)}Generate Geotagged Image</button><p>Download Optimized Image after local metadata is generated.</p>`);

define('rm-about',`
:host{display:block;box-sizing:border-box;height:197px;margin-top:35.500px;background:#f8f9fb;padding:43px 0 0 522px;color:#525252}
h2{margin:0;font:700 22.400px/30px Roboto,sans-serif;letter-spacing:-.23px;color:#1a1a2e}
p{margin:0;width:838px;font:400 13.050px/23px Roboto,sans-serif}
.a{margin-top:10px}.b{margin-top:14px}
`,`<h2>Local Image Metadata Utility</h2><p class="a">Add accurate local metadata to JPEG, JPG, and WebP images before publishing them.</p><p class="b">Use geotagged images as one supporting part of a practical local SEO workflow alongside heatmap scans, keyword research, and client-ready reporting.</p>`);

define('rm-cta',`
:host{display:flex;align-items:center;justify-content:space-between;box-sizing:border-box;height:143px;margin-top:42px;padding:0 24px;border:1px solid rgba(120,150,170,.24);border-radius:24px;
background:radial-gradient(560px 240px at 14% 0,rgba(16,80,76,.85),rgba(16,80,76,0) 100%),radial-gradient(700px 200px at 10% 100%,rgba(12,60,62,.55),rgba(12,60,62,0) 100%),linear-gradient(95deg,#0d3338,#101a2a 46%,#111a2c 100%)}
.tx{padding-top:8px}
h2{margin:0;font:900 42px/50px Roboto,sans-serif;letter-spacing:-1.410px;color:#fff}
p{margin:15px 0 0;font:400 13.020px/18px Roboto,sans-serif;color:#a9b6bb}
button{width:159px;height:42px;border:0;border-radius:11px;background:linear-gradient(100deg,#1fd6f5 0,#1cf0c4 50%,#95f79b 100%);color:#06211f;font:700 13px/1 Roboto,sans-serif;box-shadow:0 8px 38px rgba(25,240,190,.32)}
`,`<div class="tx"><h2>Save metadata profiles for repeatable local media workflows.</h2><p>Create a free account to keep business details, reuse profiles, and prepare client image metadata faster.</p></div><button>Create Free Account</button>`);

define('rm-footer',`
:host{display:block;box-sizing:border-box;height:350px;margin-top:120.500px;border-top:1px solid #1a2430;background:#030915;color:#9aa4b2}
.in{width:1180px;margin:0 auto}
.g{display:grid;grid-template-columns:566px 286px 1fr;gap:24px;height:275px;border-bottom:1px solid #18212d}
.g>div{padding-top:45px}
.g>.b{padding-top:42px}
rm-logo{padding-left:20px;display:flex;height:42px}
.d{margin:31px 0 0;font:400 13px/20px Roboto,sans-serif;width:570px}
.d+.d{margin-top:20px}
h4{margin:0 0 11px;font:700 12.500px/20px Roboto,sans-serif;color:#fff}
a{display:block;height:29px;font:400 13px/20px Roboto,sans-serif;color:#9aa4b2;text-decoration:none}
.e{display:flex;justify-content:space-between;padding-top:23px;font:400 13.800px/20px Roboto,sans-serif}
`,`<div class="in"><div class="g"><div class="b"><rm-logo></rm-logo><p class="d">Local SEO heatmaps, weak-zone discovery, technical audits, page analysis, keyword research, and metadata workflows for teams that need clearer visibility.</p><p class="d">Built by Mostafa Hana.</p></div>
<div><h4>Core Tools</h4><a href="#">Local SEO Heatmap</a><a href="#">Keyword Discovery</a><a href="#">Traffic Checker</a><a href="#">Page Analyzer</a><a href="#">Site Audit</a><a href="#">Metadata Utility</a></div>
<div><h4>Company</h4><a href="#">Blog</a><a href="#">Terms</a><a href="#">Privacy</a><a href="#">Cookies</a><a href="#">Refunds</a><a href="#">Contact</a></div></div>
<div class="e"><span>© 2026 RunMySEO. Client-ready local SEO insights.</span><span>Support: support@runmyseo.online</span></div></div>`);
</script>
</body>
</html>
